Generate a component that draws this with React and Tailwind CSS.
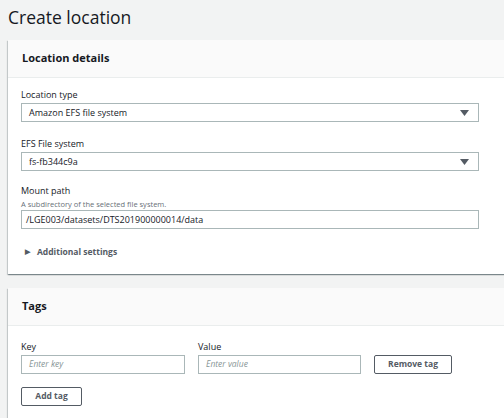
import { useState } from 'react'

function Caret() {
    return (
        <svg width="9" height="6" viewBox="0 0 9 6" className="shrink-0">
            <path d="M0 0h9L4.5 6z" fill="#545b64" />
        </svg>
    )
}

function Select({ value }) {
    return (
        <div className="flex items-center justify-between h-[19px] w-[458px] border border-[#aab7b8] bg-white pl-[7px] pr-[9px]">
            <span className="text-[9px] text-[#16191f]">{value}</span>
            <Caret />
        </div>
    )
}

function Card({ title, children, className }) {
    return (
        <div className={'w-[530px] bg-white shadow-[0_1px_1px_0_rgba(0,28,36,0.3),1px_1px_1px_0_rgba(0,28,36,0.15),-1px_1px_1px_0_rgba(0,28,36,0.15)] ' + (className || '')}>
            <div className="h-[38px] bg-[#fafafa] border-b border-[#eaeded] flex items-center px-[14px]">
                <h2 className="text-[11px] font-bold text-[#16191f]">{title}</h2>
            </div>
            {children}
        </div>
    )
}

export default function App() {
    const [open, setOpen] = useState(false)

    return (
        <div className="w-[504px] h-[418px] overflow-hidden bg-[#f2f3f3] font-['Open_Sans',sans-serif] text-[#16191f]">
            <h1 className="pl-[8px] pt-[2px] h-[40px] text-[17.5px] leading-[30px] text-[#16191f]">Create location</h1>

            <div className="pl-[8px]">
                <Card title="Location details">
                    <div className="pl-[13px] pt-[9px] pb-[15px]">
                        <p className="text-[9px] leading-[16px]">Location type</p>
                        <Select value="Amazon EFS file system" />

                        <p className="text-[9px] leading-[16px] mt-[14px]">EFS File system</p>
                        <Select value="fs-fb344c9a" />

                        <p className="text-[9px] leading-[16px] mt-[12px]">Mount path</p>
                        <p className="text-[7.5px] leading-[10px] text-[#687078]">A subdirectory of the selected file system.</p>
                        <div className="mt-[1px] h-[19px] w-[458px] border border-[#aab7b8] bg-white pl-[4px] flex items-center text-[9px]">
                            /LGE003/datasets/DTS201900000014/data
                        </div>

                        <button onClick={() => setOpen(!open)} className="mt-[17px] flex items-center gap-[7px] pl-[4px] text-[8.5px] font-bold text-[#545b64]">
                            <span className="text-[7px]">{open ? '▼' : '▶'}</span>
                            Additional settings
                        </button>
                    </div>
                </Card>

                <Card title="Tags" className="mt-[14px] pb-[20px]">
                    <div className="pl-[13px] pt-[13px]">
                        <div className="flex items-end gap-[13px]">
                            <div>
                                <p className="text-[9px] leading-[16px]">Key</p>
                                <div className="h-[19px] w-[164px] border border-[#aab7b8] pl-[7px] flex items-center text-[8.5px] italic text-[#879596]">Enter key</div>
                            </div>
                            <div>
                                <p className="text-[9px] leading-[16px]">Value</p>
                                <div className="h-[19px] w-[163px] border border-[#aab7b8] pl-[7px] flex items-center text-[8.5px] italic text-[#879596]">Enter value</div>
                            </div>
                            <button className="h-[19px] w-[78px] border border-[#545b64] rounded-[2px] text-[8.5px] font-bold text-[#545b64]">Remove tag</button>
                        </div>
                        <button className="mt-[13px] h-[19px] w-[61px] border border-[#545b64] rounded-[2px] text-[8.5px] font-bold text-[#545b64]">Add tag</button>
                    </div>
                </Card>
            </div>
        </div>
    )
}
